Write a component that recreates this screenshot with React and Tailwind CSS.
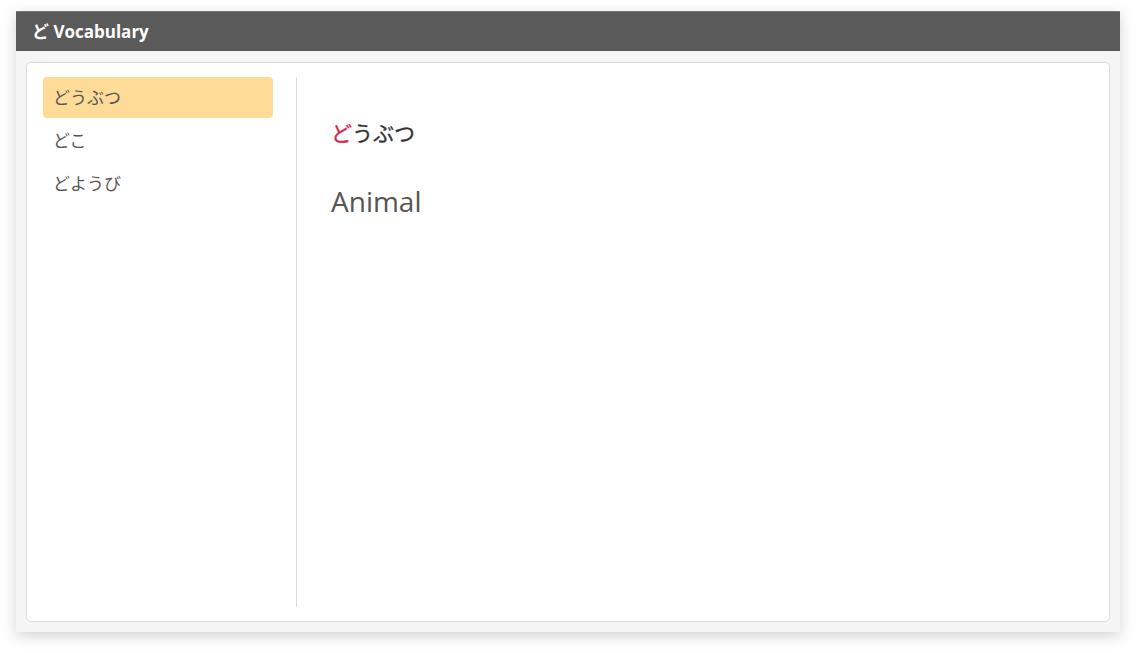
const words = ["どうぶつ", "どこ", "どようび"];

export default function App() {
  const font = { fontFamily: '"Open Sans", "Noto Sans CJK JP", sans-serif' };
  return (
    <div className="w-[1136px] h-[653px] bg-white pt-[11px] pl-[16px]" style={font}>
      <div className="w-[1104px] h-[621px] flex flex-col bg-[#f5f5f5] shadow-[0_4px_14px_rgba(0,0,0,0.18)]">
        <div className="h-[40px] shrink-0 bg-[#5a5a5a] border-t border-[#777] flex items-center px-[16px] text-white font-bold text-[17px]">
          ど Vocabulary
        </div>
        <div className="flex-1 p-[10px] pt-[11px]">
          <div className="h-full bg-white border border-[#dcdcdc] rounded-[5px] flex pt-[14px] pb-[14px]">
            <div className="w-[270px] shrink-0 pl-[16px] pr-[23px] border-r border-[#dcdcdc] flex flex-col gap-[2px]">
              {words.map((w, i) => (
                <div
                  key={w}
                  className={
                    "h-[41px] rounded-[4px] px-[10px] flex items-center text-[17px] text-[#555] " +
                    (i === 0 ? "bg-[#fedb96]" : "")
                  }
                >
                  {w}
                </div>
              ))}
            </div>
            <div className="flex-1 pl-[34px] pt-[38px]">
              <div className="text-[21px] leading-[36px] text-[#333] [-webkit-text-stroke:0.3px_currentColor]">
                <span className="text-[#d81f4a]">ど</span>うぶつ
              </div>
              <div className="mt-[32px] text-[28px] leading-[36px] text-[#555]">Animal</div>
            </div>
          </div>
        </div>
      </div>
    </div>
  );
}
